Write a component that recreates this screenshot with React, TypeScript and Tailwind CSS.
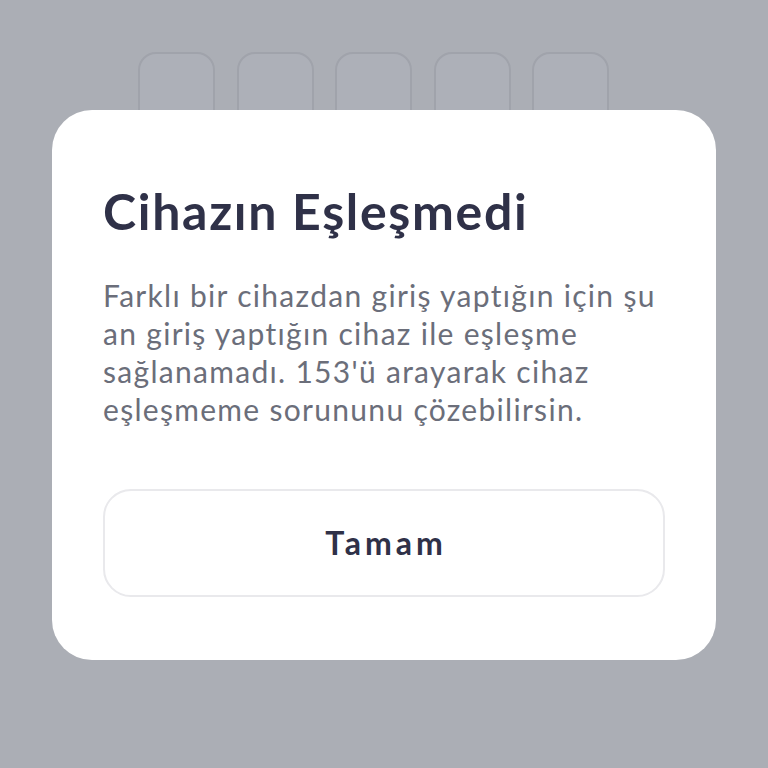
import React from 'react';

const FONT = { fontFamily: 'Lato, "Noto Sans", sans-serif' };

function CodeBoxes() {
  return (
    <div className="flex gap-[21.5px] pl-[138px] pt-[52px]">
      {[0, 1, 2, 3, 4].map((i) => (
        <div
          key={i}
          className="w-[77px] h-[90px] rounded-[18px] border-2 border-[#a0a3ab] bg-[#adb0b8]"
        />
      ))}
    </div>
  );
}

export default function App() {
  return (
    <div className="relative w-[768px] h-[768px] overflow-hidden bg-[#abaeb5]" style={FONT}>
      <CodeBoxes />
      {/* dialog lies over the code inputs */}
      <div className="absolute left-[52px] top-[110px] w-[664px] h-[550px] rounded-[40px] bg-white px-[51px] pt-[71px]">
        <h1 className="text-[50px] leading-[60px] font-bold text-[#2f3148] tracking-[1.7px] whitespace-nowrap">
          Cihazın Eşleşmedi
        </h1>
        <p className="mt-[35px] text-[30px] leading-[38px] text-[#6b6e7a] tracking-[1.3px] whitespace-nowrap">
          Farklı bir cihazdan giriş yaptığın için şu
          <br />
          an giriş yaptığın cihaz ile eşleşme
          <br />
          sağlanamadı. 153'ü arayarak cihaz
          <br />
          eşleşmeme sorununu çözebilirsin.
        </p>
        <button className="mt-[61px] w-[562px] h-[108px] rounded-[28px] border-2 border-[#e9e9ec] bg-white flex items-center justify-center pl-[4px] text-[32px] font-bold text-[#2f3148] tracking-[4px]">
          Tamam
        </button>
      </div>
    </div>
  );
}
